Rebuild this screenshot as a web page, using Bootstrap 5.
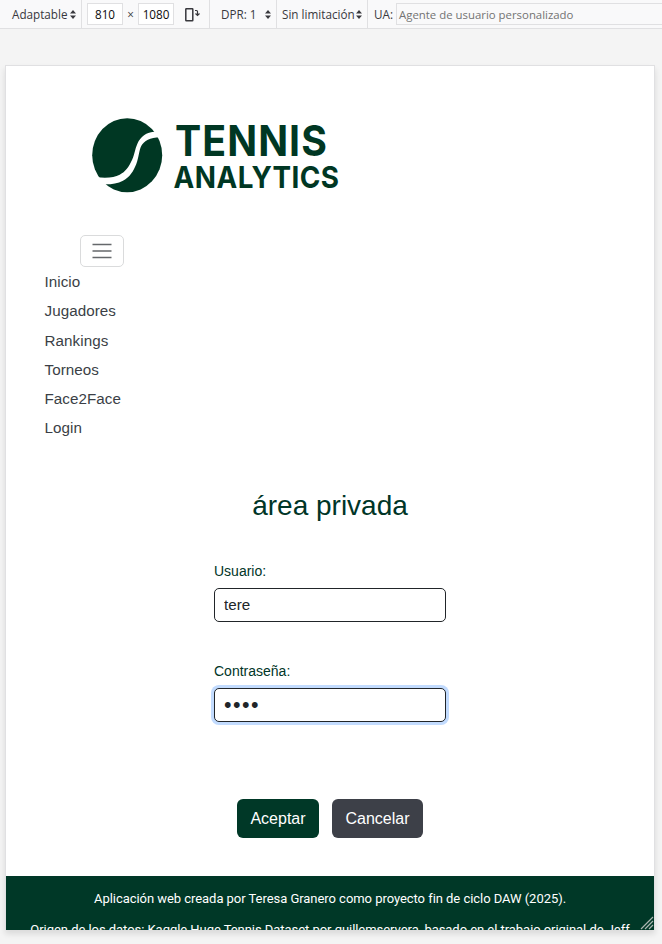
<!DOCTYPE html>
<html lang="es">
<head>
<meta charset="utf-8">
<meta name="viewport" content="width=device-width, initial-scale=1">
<title>Tennis Analytics</title>
<link href="https://cdn.jsdelivr.net/npm/bootstrap@5.3.0/dist/css/bootstrap.min.css" rel="stylesheet">
<style>
body{background:#f4f4f4;height:944px;overflow:hidden;font-family:"Liberation Sans",Arial,sans-serif}
.toolbar{height:29px;background:#f9f9fa;border-bottom:1px solid #e0e0e2;font:11.7px/28px "Open Sans","Segoe UI",sans-serif;color:#38383d;white-space:nowrap}
.tool{border-right:1px solid #e0e0e2;height:28px;flex:none}
.tool svg,.logo,.grip{display:block;flex:none}
.size-box{border:1px solid #e0e0e2;background:#fff;height:22px;width:36px;line-height:21px;text-align:center;color:#0c0c0d}
.agent{border:1px solid #e0e0e2;border-right:0;height:22px;line-height:21px;color:#737373;padding-left:2px;font-size:11.4px}
.tool-adapt{width:82px;padding-left:12px}
.tool-adapt span{width:58px}
.tool-size{width:128px;padding-left:5px}
.tool-size svg{margin:1px 0 0 10px}
.times{width:15px}
.tool-dpr{width:67px;padding-left:11px}
.tool-dpr span{width:44px;height:29px}
.tool-net{width:91px;padding-left:5px}
.tool-net span{width:74px}
.tool-ua{padding-left:6px}
.ua-label{width:22px}
.viewport-frame{width:650px;height:865px;margin:36px 0 0 5px;border:1px solid #e0e0e2;border-bottom:0;background:#fff;box-shadow:0 4px 6px rgba(12,12,13,.11)}
.logo{margin:44px 0 0 78px}
.menu-toggle{width:44px;height:32px;margin:35px 0 0 74px;border:1px solid #dadbdc;border-radius:5px;padding:0}
.menu a{font-size:15.2px;line-height:29.3px;color:#3b3f46;padding:0;letter-spacing:.06px}
.menu{padding-left:38.5px;height:176px}
h1{font-size:28px;line-height:34px;color:#003527;margin:46px 0 0}
.login{width:232px;margin:38px 0 0 208px}
.form-label{font-size:14px;line-height:20px;color:#003527;margin:0 0 7px}
.login .form-control{height:34px;font-size:15.2px;border-color:#212529;border-radius:5px;padding:0 9px 2px;color:#212529}
.login .focused{box-shadow:0 0 0 3px #c2dbfe;font-size:21.5px;letter-spacing:1.5px;padding-bottom:0}
.label-pass{margin-top:39px}
.actions{margin-top:77px;gap:13px}
.actions .btn{height:39px;font-size:16px;border:0;border-radius:6px;color:#fff;padding:0}
.actions .accept{width:82px;background:#003827}
.actions .cancel{width:91px;background:#3d4048}
.site-footer{height:54px;margin-top:38px;background:#003827;color:#fff;font:13px/20px Roboto,sans-serif;letter-spacing:-.045px}
.site-footer p{margin:0 0 11px;white-space:nowrap}
.site-footer p:first-child{padding-top:13px}
.grip{right:0;bottom:0}
</style>
</head>
<body>
<div class="toolbar d-flex overflow-hidden">
  <div class="tool tool-adapt d-flex align-items-center"><span>Adaptable</span><svg width="6" height="9"><path d="M0 3.5 3 0l3 3.5zM0 5.5h6L3 9z" fill="#38383d"/></svg></div>
  <div class="tool tool-size d-flex align-items-center"><span class="size-box">810</span><span class="times text-center">×</span><span class="size-box">1080</span>
    <svg width="17" height="16" fill="none" stroke="#38383d"><rect x="1.8" y="1.8" width="7" height="12" rx=".5" stroke-width="1.5"/><path d="M11 3.5h1.5q1 0 1 1V8M11.5 6.5l2 2 2-2" stroke-width="1.2"/></svg></div>
  <div class="tool tool-dpr d-flex align-items-center"><span>DPR: 1</span><svg width="6" height="9"><path d="M0 3.5 3 0l3 3.5zM0 5.5h6L3 9z" fill="#38383d"/></svg></div>
  <div class="tool tool-net d-flex align-items-center"><span>Sin limitación</span><svg width="6" height="9"><path d="M0 3.5 3 0l3 3.5zM0 5.5h6L3 9z" fill="#38383d"/></svg></div>
  <div class="tool-ua d-flex align-items-center flex-grow-1"><span class="ua-label">UA:</span><span class="agent flex-grow-1">Agente de usuario personalizado</span></div>
</div>
<main class="viewport-frame overflow-hidden position-relative">
  <svg class="logo" width="270" height="90" role="img" aria-label="Tennis Analytics">
    <g transform="translate(-4)" fill="#003723"><ellipse cx="47.2" cy="45.2" rx="35" ry="37"/><path d="M75.5 21.8C66 22 60.5 27 57.5 33.5C54.5 40 54.5 46 51 52C48 58 45 62 39.7 64.7C34 67.5 28 68.2 16 67.2L22 74.2C30 74.5 37 74 43 70.7C50 67 53.5 61 56.3 54C59 47 59 40 61.5 35.5C64 31 70 27.5 80 27.2Z" fill="#fff"/>
    <g font-family="Inter,sans-serif" font-weight="700"><text x="95" y="45.8" font-size="43" letter-spacing="1.2" textLength="153" lengthAdjust="spacingAndGlyphs">TENNIS</text><text x="93.5" y="77.5" font-size="30.5" letter-spacing=".5" textLength="166" lengthAdjust="spacingAndGlyphs">ANALYTICS</text></g></g>
  </svg>
  <button class="menu-toggle bg-white d-flex align-items-center justify-content-center" aria-label="Menú"><svg width="20" height="16"><path d="M.5 1.5h19M.5 8h19M.5 14.5h19" stroke="#65686b" stroke-width="1.7"/></svg></button>
  <nav class="nav flex-column flex-nowrap menu">
    <a class="nav-link" href="#">Inicio</a><a class="nav-link" href="#">Jugadores</a><a class="nav-link" href="#">Rankings</a><a class="nav-link" href="#">Torneos</a><a class="nav-link" href="#">Face2Face</a><a class="nav-link" href="#">Login</a>
  </nav>
  <h1 class="text-center fw-normal">área privada</h1>
  <form class="login">
    <label class="form-label d-block" for="user">Usuario:</label><input id="user" class="form-control" value="tere">
    <label class="form-label label-pass d-block" for="pass">Contraseña:</label><input id="pass" type="password" class="form-control focused" value="tere">
  </form>
  <div class="actions d-flex justify-content-center"><button class="btn accept">Aceptar</button><button class="btn cancel">Cancelar</button></div>
  <footer class="site-footer text-center overflow-hidden"><p>Aplicación web creada por Teresa Granero como proyecto fin de ciclo DAW (2025).</p><p>Origen de los datos: Kaggle Huge Tennis Dataset por guillemservera, basado en el trabajo original de Jeff</p></footer>
  <svg class="grip position-absolute" width="15" height="15"><path d="M2 14 14 2M6 14l8-8M10 14l4-4" stroke="#aab5b0" stroke-width="1.2"/></svg>
</main>
<script src="https://cdn.jsdelivr.net/npm/bootstrap@5.3.0/dist/js/bootstrap.bundle.min.js"></script>
</body>
</html>
